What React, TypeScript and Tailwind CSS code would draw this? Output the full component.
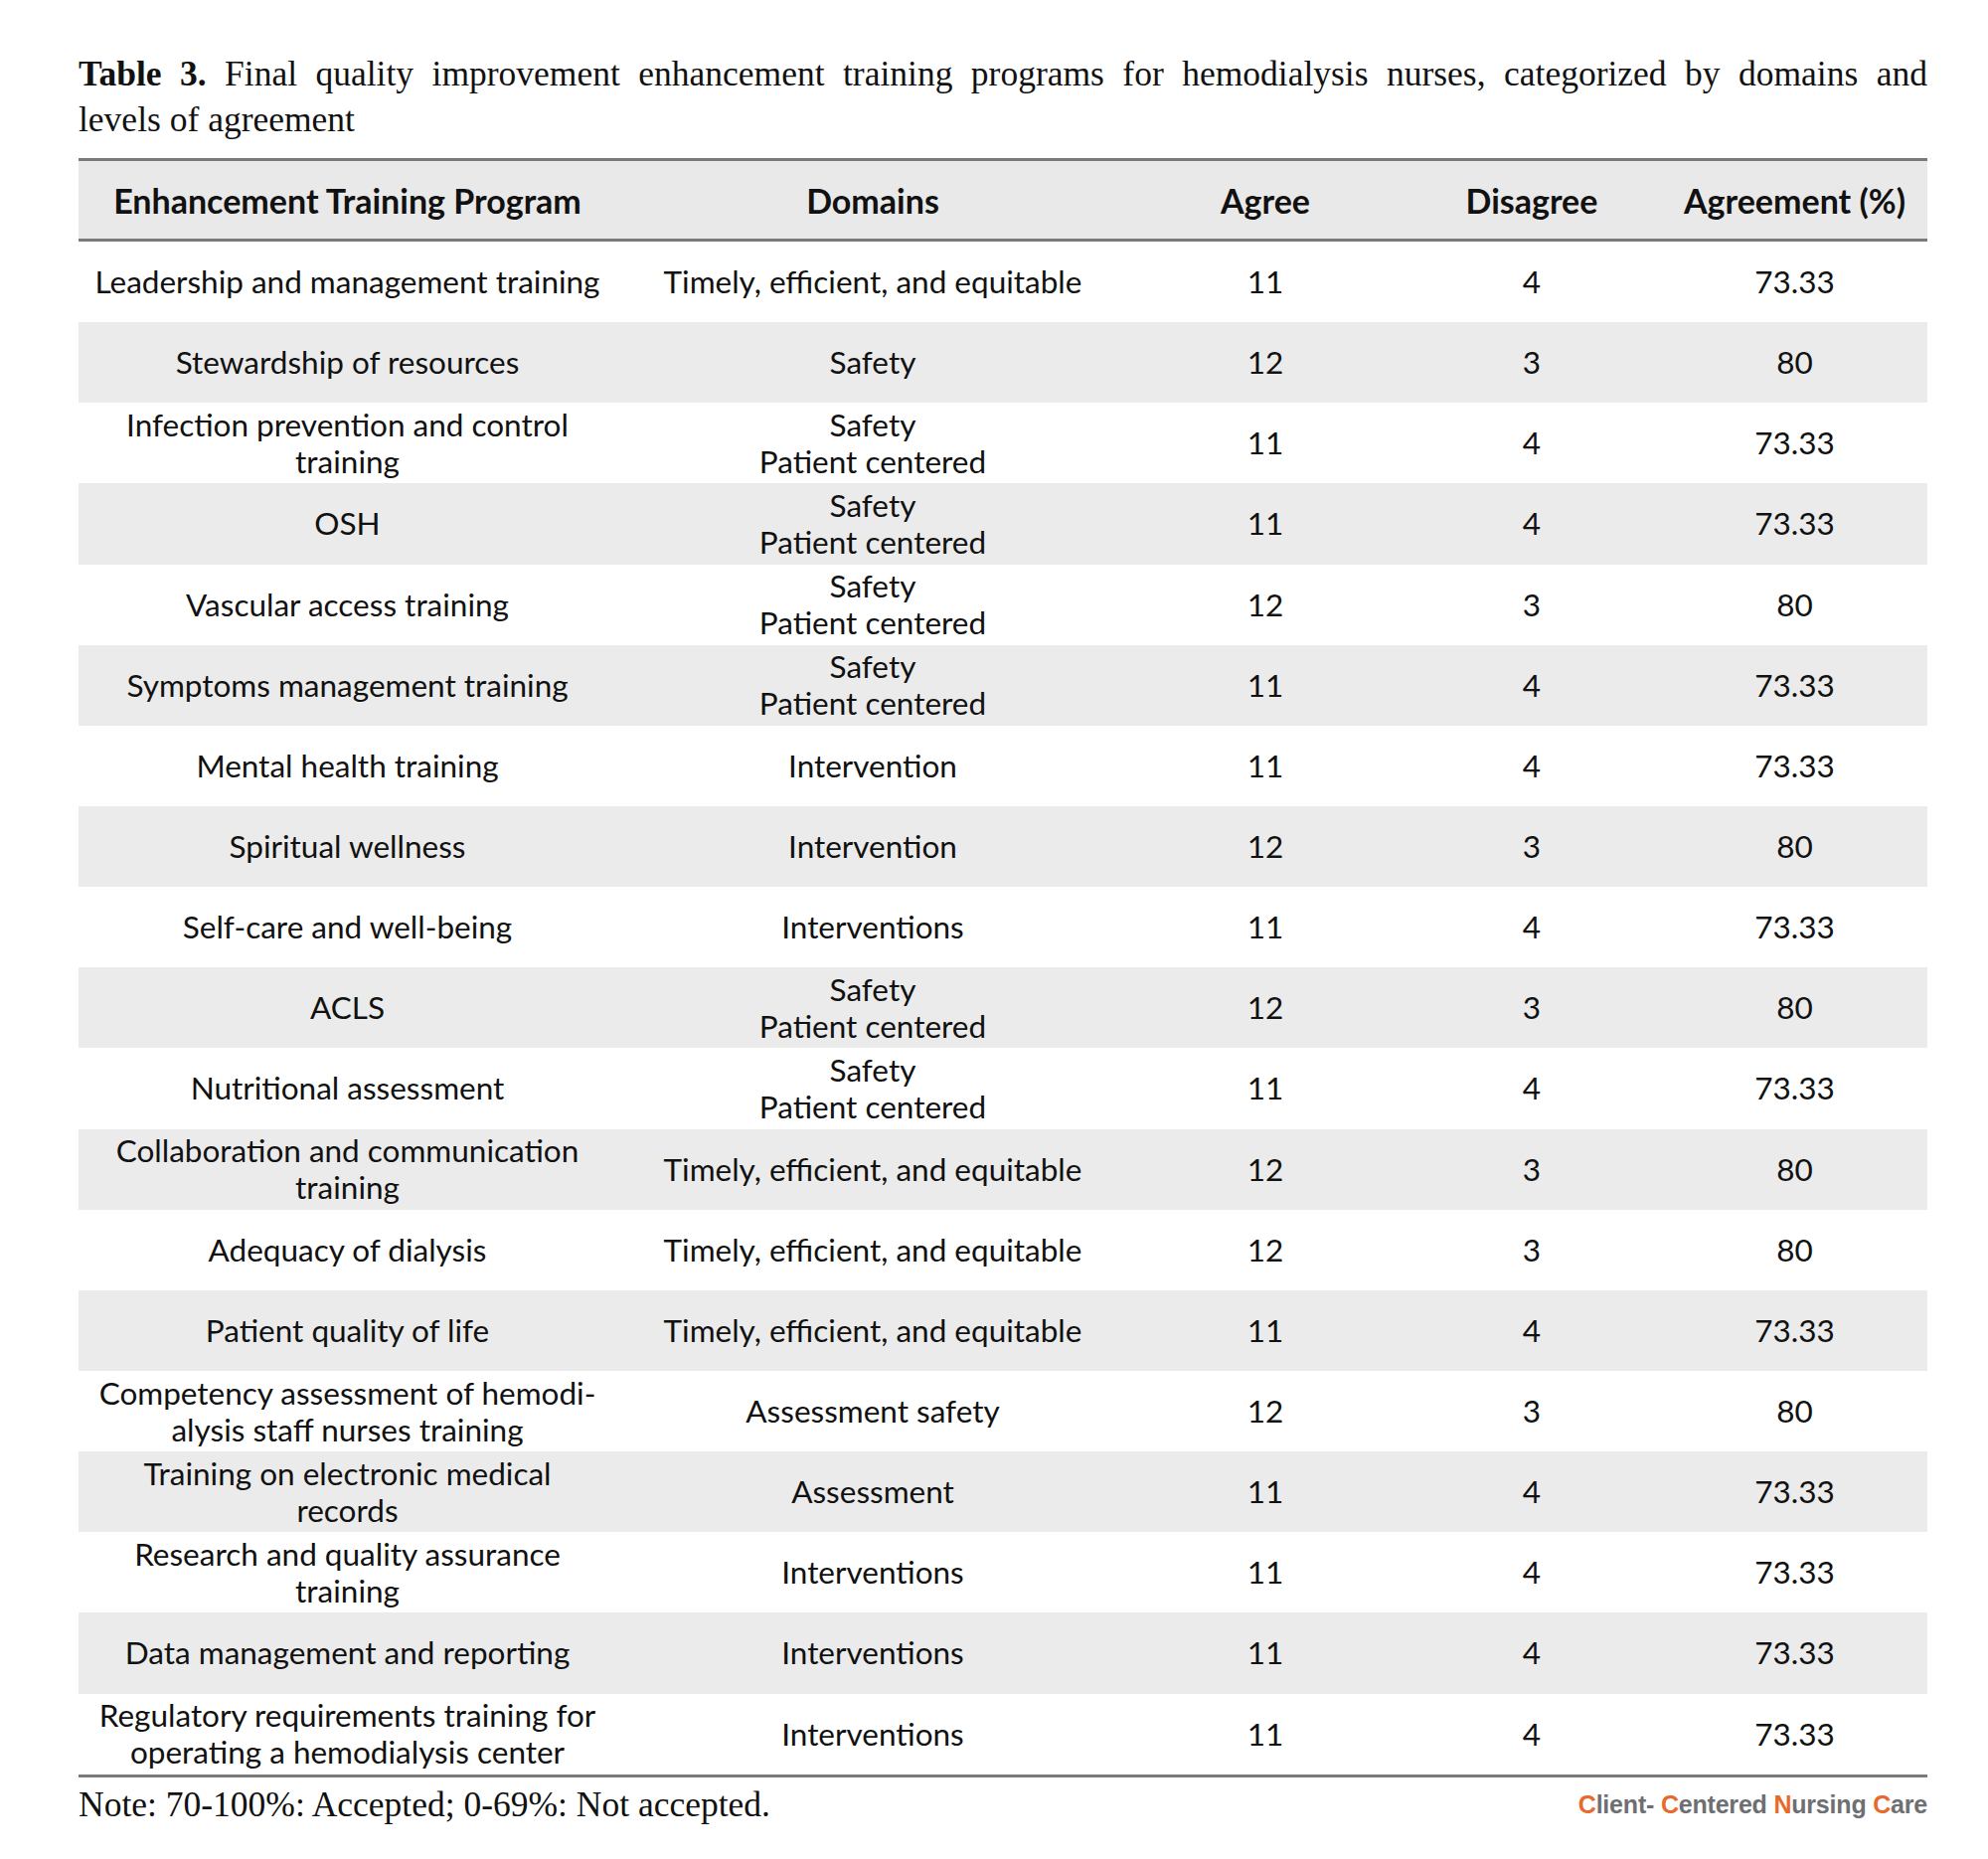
import React from "react";

type Row = {
  program: string[];
  domains: string[];
  agree: string;
  disagree: string;
  pct: string;
};

const T = ["Timely, efficient, and equitable"];
const SP = ["Safety", "Patient centered"];

const rows: Row[] = [
  { program: ["Leadership and management training"], domains: T, agree: "11", disagree: "4", pct: "73.33" },
  { program: ["Stewardship of resources"], domains: ["Safety"], agree: "12", disagree: "3", pct: "80" },
  { program: ["Infection prevention and control", "training"], domains: SP, agree: "11", disagree: "4", pct: "73.33" },
  { program: ["OSH"], domains: SP, agree: "11", disagree: "4", pct: "73.33" },
  { program: ["Vascular access training"], domains: SP, agree: "12", disagree: "3", pct: "80" },
  { program: ["Symptoms management training"], domains: SP, agree: "11", disagree: "4", pct: "73.33" },
  { program: ["Mental health training"], domains: ["Intervention"], agree: "11", disagree: "4", pct: "73.33" },
  { program: ["Spiritual wellness"], domains: ["Intervention"], agree: "12", disagree: "3", pct: "80" },
  { program: ["Self-care and well-being"], domains: ["Interventions"], agree: "11", disagree: "4", pct: "73.33" },
  { program: ["ACLS"], domains: SP, agree: "12", disagree: "3", pct: "80" },
  { program: ["Nutritional assessment"], domains: SP, agree: "11", disagree: "4", pct: "73.33" },
  { program: ["Collaboration and communication", "training"], domains: T, agree: "12", disagree: "3", pct: "80" },
  { program: ["Adequacy of dialysis"], domains: T, agree: "12", disagree: "3", pct: "80" },
  { program: ["Patient quality of life"], domains: T, agree: "11", disagree: "4", pct: "73.33" },
  { program: ["Competency assessment of hemodi-", "alysis staff nurses training"], domains: ["Assessment safety"], agree: "12", disagree: "3", pct: "80" },
  { program: ["Training on electronic medical", "records"], domains: ["Assessment"], agree: "11", disagree: "4", pct: "73.33" },
  { program: ["Research and quality assurance", "training"], domains: ["Interventions"], agree: "11", disagree: "4", pct: "73.33" },
  { program: ["Data management and reporting"], domains: ["Interventions"], agree: "11", disagree: "4", pct: "73.33" },
  { program: ["Regulatory requirements training for", "operating a hemodialysis center"], domains: ["Interventions"], agree: "11", disagree: "4", pct: "73.33" },
];

const grid = "grid grid-cols-[541px_516px_274px_262px_267px]";

function Cell({ lines }: { lines: string[] }) {
  return (
    <div className="flex flex-col items-center justify-center text-center leading-[37px]">
      {lines.map((l, i) => (
        <span key={i} className="whitespace-nowrap">{l}</span>
      ))}
    </div>
  );
}

export default function App() {
  return (
    <div className="w-[2000px] h-[1870px] bg-white text-[#111]">
      <div className="pl-[79px] pr-[61px] pt-[51px]">
        <div className="font-['Liberation_Serif',serif] text-[35.5px] leading-[46px]">
          <div className="text-justify [text-align-last:justify] whitespace-nowrap">
            <span className="font-bold">Table 3.</span> Final quality improvement enhancement training programs for hemodialysis nurses, categorized by domains and
          </div>
          <div>levels of agreement</div>
        </div>

        <div className="mt-[16px] border-t-[3px] border-b-[3px] border-[#7a7a7a] font-['Lato',sans-serif] text-[31.5px]">
          <div className={`${grid} h-[81px] bg-[#e9e9e9] font-bold text-[34px] border-b-[3px] border-[#7a7a7a]`}>
            <div className="flex items-center justify-center">Enhancement Training Program</div>
            <div className="flex items-center justify-center">Domains</div>
            <div className="flex items-center justify-center">Agree</div>
            <div className="flex items-center justify-center">Disagree</div>
            <div className="flex items-center justify-center">Agreement (%)</div>
          </div>
          {rows.map((r, i) => (
            <div
              key={i}
              className={`${grid} h-[81.15px] ${i % 2 === 1 ? "bg-[#ebebeb]" : "bg-white"}`}
            >
              <Cell lines={r.program} />
              <Cell lines={r.domains} />
              <Cell lines={[r.agree]} />
              <Cell lines={[r.disagree]} />
              <Cell lines={[r.pct]} />
            </div>
          ))}
        </div>

        <div className="flex items-center justify-between h-[56px]">
          <div className="font-['Liberation_Serif',serif] text-[35.5px]">
            Note: 70-100%: Accepted; 0-69%: Not accepted.
          </div>
          <div className="font-['Liberation_Sans',sans-serif] font-bold text-[25px] tracking-[-0.2px] text-[#6e6f72]">
            <span className="text-[#e8692c]">C</span>lient- <span className="text-[#e8692c]">C</span>entered <span className="text-[#e8692c]">N</span>ursing <span className="text-[#e8692c]">C</span>are
          </div>
        </div>
      </div>
    </div>
  );
}
